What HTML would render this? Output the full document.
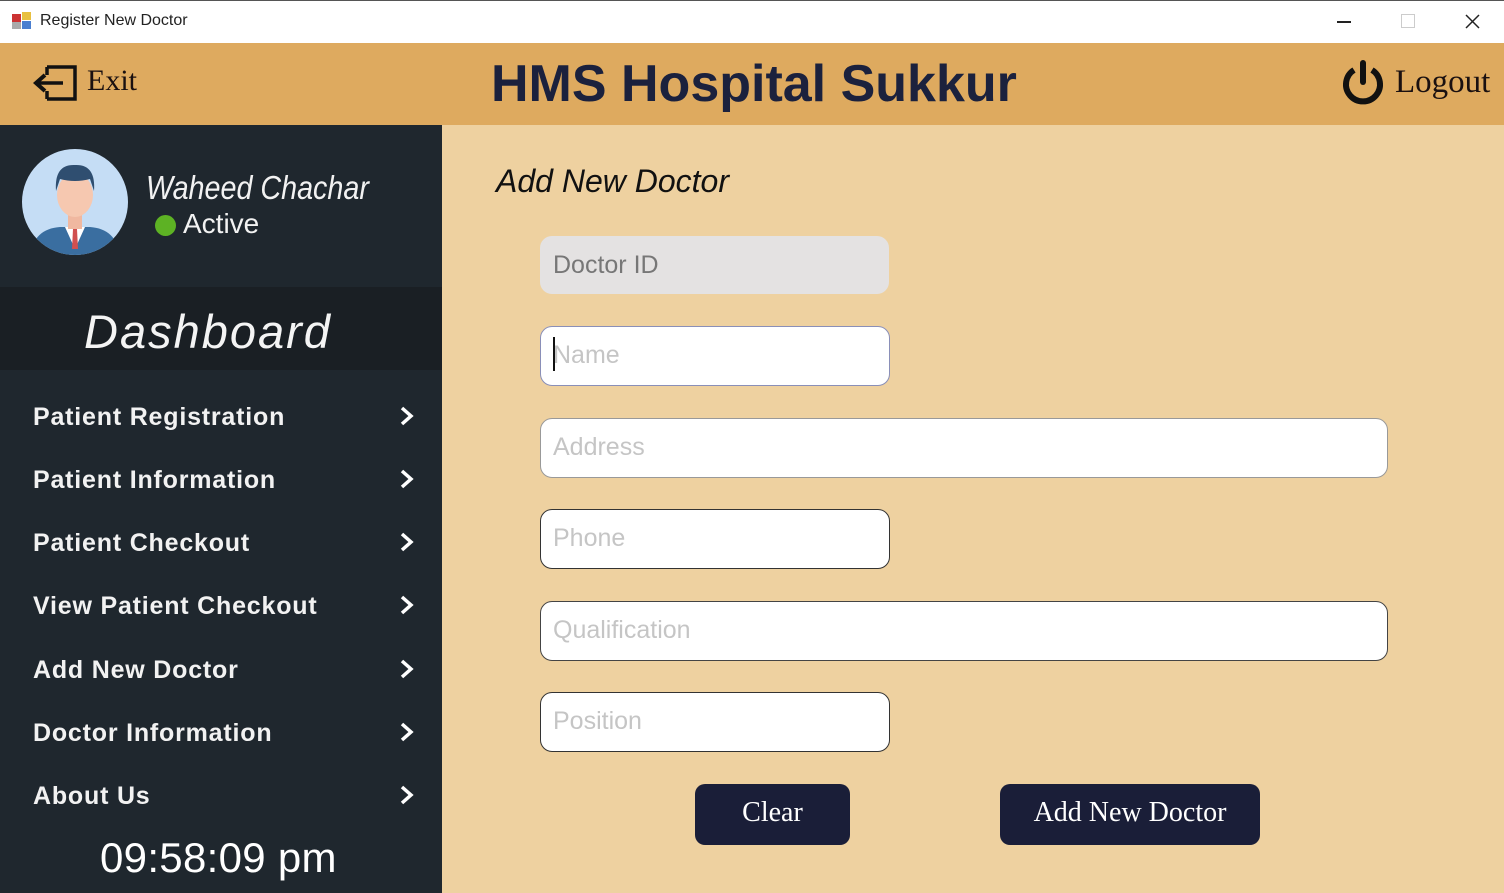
<!DOCTYPE html>
<html><head><meta charset="utf-8"><style>
*{margin:0;padding:0;box-sizing:border-box}
body{width:1504px;height:893px;overflow:hidden;position:relative;background:#EED1A0;font-family:"Liberation Sans",sans-serif}
.a{position:absolute}
#tb{left:0;top:0;width:1504px;height:43px;background:#fff;border-top:1px solid #555}
#hd{left:0;top:43px;width:1504px;height:82px;background:#DEAA5F}
#sb{left:0;top:125px;width:442px;height:768px;background:#1F272E}
#db{left:0;top:287px;width:442px;height:83px;background:#1A1F24}
.mi{left:33px;color:#F2F2F2;font-size:25px;font-weight:bold;letter-spacing:0.8px;width:382px}
.mi svg{position:absolute;right:0;top:2px}
.in{position:absolute;left:540px;height:60px;background:#fff;border:1px solid #999;border-radius:12px;color:#c5c5c5;font-size:25px;padding:14px 0 0 12px}
.bt{position:absolute;top:784px;height:61px;background:#1A1E38;border-radius:10px;color:#fff;font-family:"Liberation Serif",serif;font-size:28px;text-align:center;line-height:58px}
</style></head><body>
<div id="tb" class="a">
 <svg class="a" style="left:12px;top:11px" width="20" height="18"><rect x="0" y="2" width="9" height="8" fill="#c33"/><rect x="10" y="0" width="9" height="8" fill="#e8c040"/><rect x="0" y="10" width="9" height="7" fill="#aaa"/><rect x="10" y="9" width="9" height="8" fill="#4a7fd0"/></svg>
 <div class="a" style="left:40px;top:11px;font-size:16px;color:#222">Register New Doctor</div>
 <div class="a" style="left:1337px;top:20px;width:14px;height:1.5px;background:#222"></div>
 <div class="a" style="left:1401px;top:13px;width:14px;height:14px;border:1px solid #ccc"></div>
 <svg class="a" style="left:1465px;top:13px" width="15" height="15"><path d="M1 1L14 14M14 1L1 14" stroke="#222" stroke-width="1.5"/></svg>
</div>
<div id="hd" class="a">
 <svg class="a" style="left:33px;top:21px" width="44" height="38"><path d="M14 3H42V35H14M14 3V11M14 35V27" fill="none" stroke="#111" stroke-width="3.5"/><path d="M4 19H30" stroke="#111" stroke-width="3.5"/><path d="M12 11L3 19L12 27" fill="none" stroke="#111" stroke-width="4"/></svg>
 <div class="a" style="left:87px;top:21px;font-family:'Liberation Serif',serif;font-size:30px;color:#1a1010">Exit</div>
 <div class="a" style="left:491px;top:11px;font-size:52px;font-weight:bold;color:#1B213D">HMS Hospital Sukkur</div>
 <svg class="a" style="left:1340px;top:17px" width="46" height="46"><path d="M14 10A17 17 0 1 0 32 10" fill="none" stroke="#111" stroke-width="6"/><path d="M23 3V22" stroke="#111" stroke-width="6" stroke-linecap="round"/></svg>
 <div class="a" style="left:1395px;top:21px;font-family:'Liberation Serif',serif;font-size:33px;color:#1a1010">Logout</div>
</div>
<div id="sb" class="a"></div>
<div id="db" class="a"></div>
<svg class="a" style="left:20px;top:149px" width="110" height="106"><circle cx="55" cy="53" r="53" fill="#C5DDF5"/><clipPath id="c"><circle cx="55" cy="53" r="53"/></clipPath><g clip-path="url(#c)"><path d="M10 110Q12 80 40 78L70 78Q98 80 100 110Z" fill="#3A6EA0"/><path d="M45 78L55 100L65 78Z" fill="#fff"/><path d="M53 80L57 80L58 100L52 100Z" fill="#D05050"/><rect x="48" y="62" width="14" height="18" fill="#F0B8A0"/><ellipse cx="55" cy="46" rx="18" ry="22" fill="#F6C8B0"/><path d="M36 42Q34 15 55 16Q76 15 74 42L70 30Q55 34 40 30Z" fill="#2F4E70"/></g></svg>
<div class="a" style="left:146px;top:169px;font-size:33px;font-style:italic;color:#F2F2F2;transform:scaleX(0.87);transform-origin:left">Waheed Chachar</div>
<div class="a" style="left:155px;top:215px;width:21px;height:21px;border-radius:50%;background:#5DB224"></div>
<div class="a" style="left:183px;top:208px;font-size:28px;color:#F2F2F2">Active</div>
<div class="a" style="left:84px;top:304px;font-size:47px;font-style:italic;color:#F4F4F4;letter-spacing:2px">Dashboard</div>
<div class="a mi" style="top:403px">Patient Registration<svg width="16" height="22"><path d="M3 3L12 11L3 19" fill="none" stroke="#fff" stroke-width="3.5"/></svg></div>
<div class="a mi" style="top:466px">Patient Information<svg width="16" height="22"><path d="M3 3L12 11L3 19" fill="none" stroke="#fff" stroke-width="3.5"/></svg></div>
<div class="a mi" style="top:529px">Patient Checkout<svg width="16" height="22"><path d="M3 3L12 11L3 19" fill="none" stroke="#fff" stroke-width="3.5"/></svg></div>
<div class="a mi" style="top:592px">View Patient Checkout<svg width="16" height="22"><path d="M3 3L12 11L3 19" fill="none" stroke="#fff" stroke-width="3.5"/></svg></div>
<div class="a mi" style="top:656px">Add New Doctor<svg width="16" height="22"><path d="M3 3L12 11L3 19" fill="none" stroke="#fff" stroke-width="3.5"/></svg></div>
<div class="a mi" style="top:719px">Doctor Information<svg width="16" height="22"><path d="M3 3L12 11L3 19" fill="none" stroke="#fff" stroke-width="3.5"/></svg></div>
<div class="a mi" style="top:782px">About Us<svg width="16" height="22"><path d="M3 3L12 11L3 19" fill="none" stroke="#fff" stroke-width="3.5"/></svg></div>
<div class="a" style="left:100px;top:834px;font-size:42px;color:#fff;letter-spacing:0.3px">09:58:09 pm</div>
<div class="a" style="left:496px;top:163px;font-size:32px;font-style:italic;color:#111">Add New Doctor</div>
<div class="in" style="top:236px;width:349px;height:58px;background:#E4E2E2;border-color:#E4E2E2;color:#777">Doctor ID</div>
<div class="in" style="top:326px;width:350px;border-color:#8a8fb8">Name</div>
<div class="a" style="left:553px;top:337px;width:2px;height:34px;background:#111"></div>
<div class="in" style="top:418px;width:848px">Address</div>
<div class="in" style="top:509px;width:350px;border-color:#333">Phone</div>
<div class="in" style="top:601px;width:848px;border-color:#444">Qualification</div>
<div class="in" style="top:692px;width:350px;border-color:#333">Position</div>
<div class="bt" style="left:695px;width:155px">Clear</div>
<div class="bt" style="left:1000px;width:260px">Add New Doctor</div>
</body></html>
